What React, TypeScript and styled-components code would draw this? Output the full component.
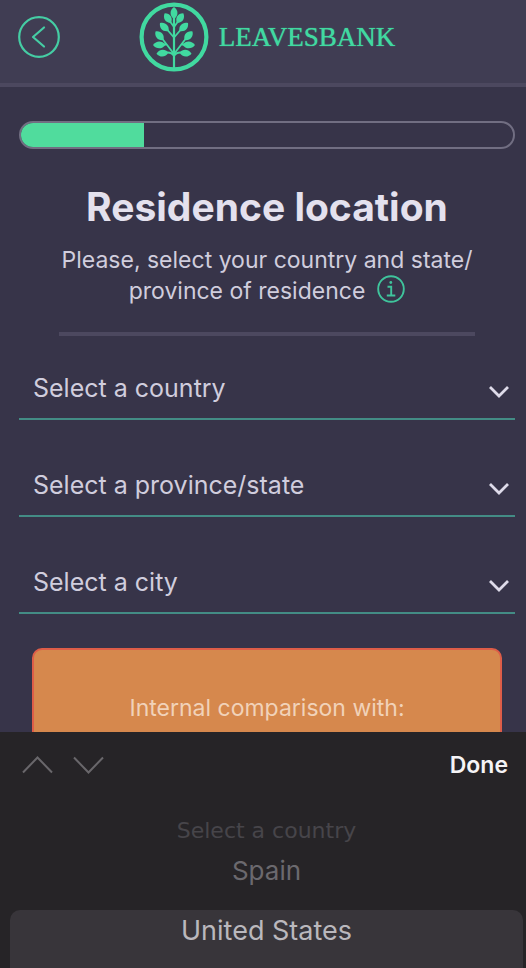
import React, { useState } from "react";
import styled, { createGlobalStyle } from "styled-components";

const GlobalStyle = createGlobalStyle`
  * { box-sizing: border-box; }
  body {
    margin: 0;
    background: #373449;
    font-family: Inter, "Liberation Sans", sans-serif;
  }
  button, select { font-family: inherit; }
  button { cursor: pointer; }
`;

const Page = styled.div`
  display: flex;
  flex-direction: column;
  height: 100vh;
  overflow: hidden;
  color: #d0cddd;
`;

const Header = styled.header`
  display: grid;
  grid-template-columns: 1fr auto 1fr;
  align-items: center;
  flex: none;
  padding: 2px 10px 11px 18px;
  background: #403d53;
  border-bottom: 4px solid #4c485f;
`;

const IconButton = styled.button`
  display: flex;
  justify-self: start;
  padding: 0;
  border: 0;
  background: none;
  color: inherit;
`;

const Brand = styled.a`
  display: flex;
  align-items: center;
  gap: 10px;
  color: #41d9a0;
  font: 27px/32px "Liberation Serif", serif;
  text-decoration: none;
  text-shadow: 0 0 1px currentColor;
`;

const Content = styled.main`
  flex: 1;
  min-height: 0;
  overflow: hidden;
  padding: 34px 11px 0 19px;
`;

const Progress = styled.div`
  height: 28px;
  border: 2px solid #716e82;
  border-radius: 14px;
  overflow: hidden;
`;

const ProgressFill = styled.div`
  height: 100%;
  background: #50dc9d;
`;

const Intro = styled.section`
  margin: 0 40px;
  padding-bottom: 26px;
  border-bottom: 4px solid #4c485f;
  text-align: center;
`;

const Title = styled.h1`
  margin: 33px 0 13px;
  color: #e4e1ee;
  font-size: 39px;
  font-weight: 700;
  line-height: 50px;
  white-space: nowrap;
`;

const Lead = styled.p`
  margin: 0 -12px;
  font-size: 23px;
  line-height: 30px;
`;

const InfoButton = styled.button`
  display: inline-flex;
  margin-left: 12px;
  padding: 0;
  border: 0;
  background: none;
  vertical-align: -4px;
`;

const Fields = styled.form`
  display: grid;
  gap: 35px;
  margin-top: 22px;
`;

const Field = styled.div`
  display: grid;
  align-items: center;
  border-bottom: 2px solid #438c85;

  > * { grid-area: 1 / 1; }
  > svg { justify-self: end; margin: 8px 5px 0 0; pointer-events: none; }
`;

const Select = styled.select`
  appearance: none;
  width: 100%;
  height: 60px;
  padding: 0 40px 0 14px;
  border: 0;
  background: none;
  color: #d0cddd;
  font-size: 25px;
`;

const Notice = styled.aside`
  margin: 34px 13px 0;
  padding: 43px 16px;
  min-height: 160px;
  border: 2px solid #dd5d48;
  border-radius: 10px;
  background: #d6884d;
  color: #f1d2b9;
  font-size: 23px;
  line-height: 30px;
  text-align: center;
`;

const Picker = styled.section`
  flex: none;
  background: #262427;
`;

const Toolbar = styled.div`
  display: flex;
  align-items: center;
  gap: 20px;
  height: 66px;
  padding: 0 18px 0 22px;
  color: #69676b;
`;

const DoneButton = styled.button`
  margin-left: auto;
  padding: 0;
  border: 0;
  background: none;
  color: #f5f4f6;
  font-size: 23px;
  font-weight: 600;
`;

const Wheel = styled.div`
  display: flex;
  flex-direction: column;
  padding: 22px 3px 0 10px;
`;

const Option = styled.button<{ $depth: "far" | "near" | "current" }>`
  border: 0;
  padding: 0;
  background: none;
  ${({ $depth }) =>
    $depth === "far"
      ? `height: 22px; color: #47454a; font-family: "DejaVu Sans", sans-serif; font-size: 22px; line-height: 22px;`
      : $depth === "near"
        ? `height: 56px; margin-bottom: 12px; color: #6b696e; font-size: 26px;`
        : `height: 58px; padding-bottom: 18px; border-radius: 10px 10px 0 0; background: #38353a; color: #bab8bd; font-size: 27px;`}
`;

const leafShape = (x1: number, y1: number, x2: number, y2: number) => {
  const dx = (x2 - x1) * 0.25;
  const dy = (y2 - y1) * 0.25;
  const w = 4.6 / Math.hypot(x2 - x1, y2 - y1);
  const nx = (y1 - y2) * w;
  const ny = (x2 - x1) * w;
  return `M${x1} ${y1}C${x1 + dx + nx} ${y1 + dy + ny} ${x2 - dx + nx} ${y2 - dy + ny} ${x2} ${y2}C${x2 - dx - nx} ${y2 - dy - ny} ${x1 + dx - nx} ${y1 + dy - ny} ${x1} ${y1}Z`;
};

const sideLeaves = [
  [25.7, 11.3, 32, 21],
  [21, 21, 29.6, 29],
  [16.5, 29.5, 24.5, 38],
  [14, 43, 26.5, 42.7],
  [17.5, 51.8, 29.5, 50.5],
];

const Branch = () => (
  <g>
    {sideLeaves.map(([a, b, c, d]) => (
      <path key={b} d={leafShape(a, b, c, d)} fill="currentColor" />
    ))}
    <path
      d="M31 19.5L35 25M28.5 28L35 35.5M23.5 37L35 52M25 42.7H27.8M28.5 50.5Q33 50.5 35 54"
      fill="none"
      stroke="currentColor"
      strokeWidth="1.8"
    />
  </g>
);

const LeafLogo = () => (
  <svg width="70" height="70" viewBox="0 0 70 70" aria-hidden="true">
    <circle cx="35" cy="35" r="32.4" fill="none" stroke="currentColor" strokeWidth="4.2" />
    <path d="M35 14V67" stroke="currentColor" strokeWidth="2.2" />
    <path d={leafShape(35, 5, 35, 17)} fill="currentColor" />
    <Branch />
    <g transform="matrix(-1 0 0 1 70 0)">
      <Branch />
    </g>
  </svg>
);

const BackIcon = () => (
  <svg width="42" height="42" viewBox="0 0 42 42" fill="none" stroke="#45cda4" strokeWidth="2.2">
    <circle cx="21" cy="21" r="19.8" />
    <path d="M26 11.5L15 21L26 30.5" strokeLinecap="round" strokeLinejoin="round" />
  </svg>
);

const InfoIcon = () => (
  <svg width="28" height="28" viewBox="0 0 28 28" fill="none" stroke="#3fc49c" strokeWidth="1.9">
    <circle cx="14" cy="14" r="12.8" />
    <path d="M10.5 11.7H14.2V20.5M9.8 20.5H18.3" />
    <circle cx="13.8" cy="7.5" r="1.4" fill="#3fc49c" stroke="none" />
  </svg>
);

const SelectArrow = () => (
  <svg width="22" height="14" viewBox="0 0 22 14" fill="none" stroke="#dedbea" strokeWidth="2.8">
    <path d="M2 2L11 11L20 2" />
  </svg>
);

const StepArrow = ({ up = false }: { up?: boolean }) => (
  <svg width="31" height="18" viewBox="0 0 31 18" fill="none" stroke="currentColor" strokeWidth="2">
    <path d={up ? "M1 16.5L15.5 1.5L30 16.5" : "M1 1.5L15.5 16.5L30 1.5"} />
  </svg>
);

const fields = ["country", "province/state", "city"];
const countries = [
  { name: "Select a country", depth: "far" },
  { name: "Spain", depth: "near" },
  { name: "United States", depth: "current" },
] as const;

export default function App() {
  const [progress] = useState(25);

  return (
    <>
      <GlobalStyle />
      <Page>
        <Header>
          <IconButton type="button" aria-label="Back">
            <BackIcon />
          </IconButton>
          <Brand href="#">
            <LeafLogo />
            LEAVESBANK
          </Brand>
        </Header>
        <Content>
          <Progress role="progressbar" aria-label="Progress" aria-valuenow={progress}>
            <ProgressFill style={{ width: `${progress}%` }} />
          </Progress>
          <Intro>
            <Title>Residence location</Title>
            <Lead>
              Please, select your country and state/
              <br />
              province of residence
              <InfoButton type="button" aria-label="More information">
                <InfoIcon />
              </InfoButton>
            </Lead>
          </Intro>
          <Fields>
            {fields.map((name) => (
              <Field key={name}>
                <Select aria-label={name} defaultValue="">
                  <option value="">Select a {name}</option>
                </Select>
                <SelectArrow />
              </Field>
            ))}
          </Fields>
          <Notice>Internal comparison with:</Notice>
        </Content>
        <Picker aria-label="Country picker">
          <Toolbar>
            <IconButton type="button" aria-label="Previous field">
              <StepArrow up />
            </IconButton>
            <IconButton type="button" aria-label="Next field">
              <StepArrow />
            </IconButton>
            <DoneButton type="button">Done</DoneButton>
          </Toolbar>
          <Wheel role="listbox" aria-label="Country">
            {countries.map(({ name, depth }) => (
              <Option
                key={name}
                type="button"
                role="option"
                aria-selected={depth === "current"}
                $depth={depth}
              >
                {name}
              </Option>
            ))}
          </Wheel>
        </Picker>
      </Page>
    </>
  );
}
